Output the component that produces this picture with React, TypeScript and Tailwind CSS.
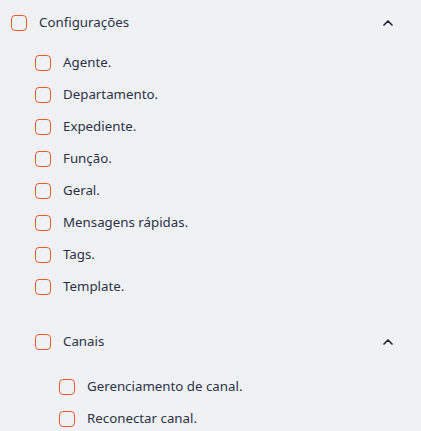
import { ChevronUp } from "lucide-react";

type Item = { label: string };

const settings: Item[] = [
  { label: "Agente." },
  { label: "Departamento." },
  { label: "Expediente." },
  { label: "Função." },
  { label: "Geral." },
  { label: "Mensagens rápidas." },
  { label: "Tags." },
  { label: "Template." },
];

const channels: Item[] = [
  { label: "Gerenciamento de canal." },
  { label: "Reconectar canal." },
];

function Box() {
  return (
    <span className="inline-block w-4 h-4 shrink-0 rounded-[4px] border-[1.5px] border-[#ee5a2b] bg-transparent" />
  );
}

function Row({ label, chevron }: { label: string; chevron?: boolean }) {
  return (
    <div className="flex items-center h-8">
      <Box />
      <span className="ml-3 text-[13.3px] text-[#2b3244]">{label}</span>
      {chevron && (
        <ChevronUp
          size={16}
          strokeWidth={2.5}
          className="ml-auto text-[#1f2433]"
        />
      )}
    </div>
  );
}

export default function App() {
  return (
    <div
      className="min-h-screen w-full bg-[#f0f1f5] pl-[11px] pr-[25px] pt-[7px]"
      style={{ fontFamily: '"Noto Sans", sans-serif' }}
    >
      <Row label="Configurações" chevron />
      <div className="flex flex-col mt-2 pl-6">
        {settings.map((item) => (
          <Row key={item.label} label={item.label} />
        ))}

        <div className="mt-[23px]">
          <Row label="Canais" chevron />
        </div>
        <div className="flex flex-col mt-[13px] pl-6">
          {channels.map((item) => (
            <Row key={item.label} label={item.label} />
          ))}
        </div>
      </div>
    </div>
  );
}
